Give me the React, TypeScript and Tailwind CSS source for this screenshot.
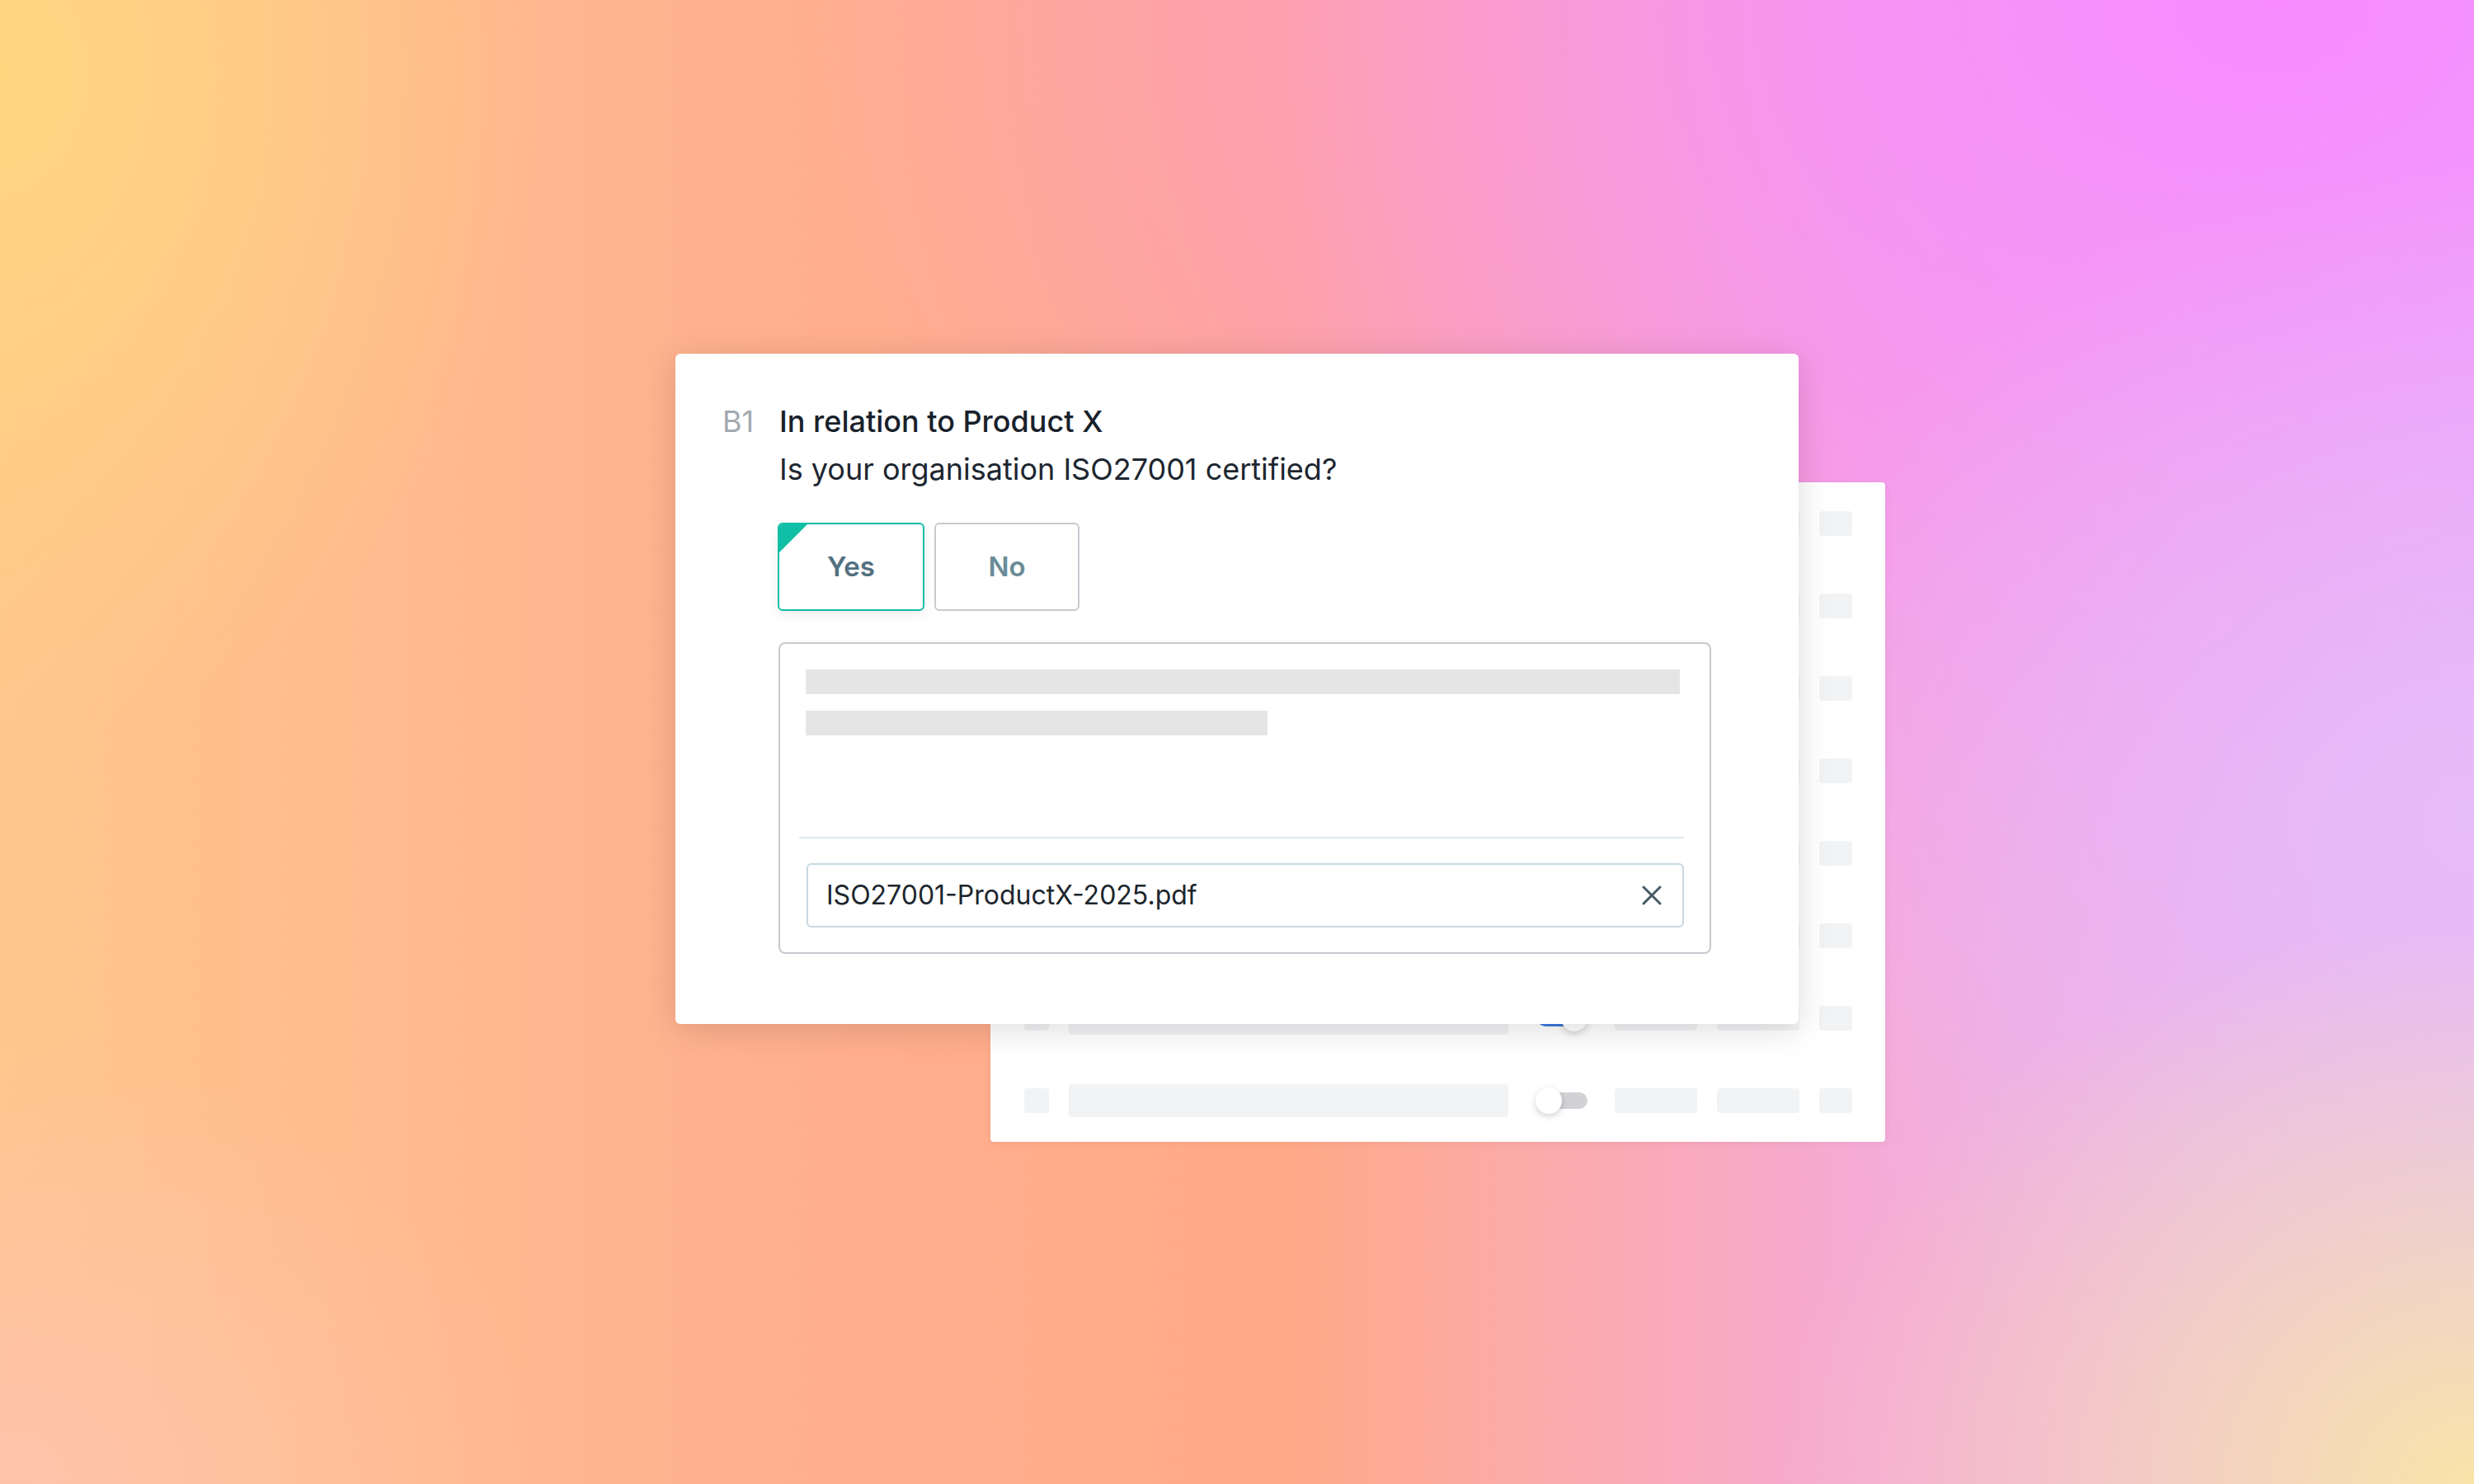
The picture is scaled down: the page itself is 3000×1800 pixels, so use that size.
import { X } from "lucide-react";

const rows = [false, true, false, false, true, false, true, false];

function Toggle({ on }: { on: boolean }) {
  return (
    <div className="relative w-[63px] h-[32px] shrink-0">
      <div
        className={`absolute left-[2px] right-0 top-[6px] h-[20px] rounded-full ${
          on ? "bg-[#3b7ddd]" : "bg-[#d1d1d6]"
        }`}
      />
      <div
        className={`absolute top-0 w-[32px] h-[32px] rounded-full bg-white shadow-[0_3px_8px_rgba(0,0,0,0.18)] ${
          on ? "right-0" : "left-0"
        }`}
      />
    </div>
  );
}

function BackRow({ on }: { on: boolean }) {
  return (
    <div className="flex items-center h-[100px] pl-[41px]">
      <div className="w-[30px] h-[30px] rounded-[4px] bg-[#f2f3f5] shrink-0" />
      <div className="ml-[24px] w-[533px] h-[40px] rounded-[4px] bg-[#f2f3f5] shrink-0" />
      <div className="ml-[33px]">
        <Toggle on={on} />
      </div>
      <div className="ml-[33px] w-[100px] h-[30px] rounded-[4px] bg-[#f2f3f5] shrink-0" />
      <div className="ml-[24px] w-[100px] h-[30px] rounded-[4px] bg-[#f2f3f5] shrink-0" />
      <div className="ml-[24px] w-[40px] h-[30px] rounded-[4px] bg-[#f2f3f5] shrink-0" />
    </div>
  );
}

export default function App() {
  return (
    <div className="w-[3000px] h-[1800px] overflow-hidden font-['Inter',sans-serif] bg-[radial-gradient(ellipse_28%_38%_at_100%_100%,#f8e4a8_0%,rgba(248,228,168,0)_100%),radial-gradient(ellipse_22%_45%_at_0%_5%,#ffd680_0%,rgba(255,214,128,0)_100%),radial-gradient(ellipse_22%_30%_at_0%_100%,#ffc3ac_0%,rgba(255,195,172,0)_100%),radial-gradient(ellipse_30%_45%_at_100%_55%,#e6bcf8_0%,rgba(230,188,248,0)_100%),radial-gradient(ellipse_60%_75%_at_92%_0%,#f78bff_0%,rgba(247,139,255,0)_100%),linear-gradient(90deg,#ffc68c_0%,#ffb08f_30%,#ffaa88_52%,#f6aad4_75%,#e6b8f6_100%)] pl-[819px] pt-[429px]">
      <div className="relative w-[1467px] h-[956px]">
        {/* back panel */}
        <div className="absolute left-[382px] top-[156px] w-[1085px] h-[800px] rounded-[4px] bg-white shadow-[0_2px_10px_rgba(0,0,0,0.06)] flex flex-col">
          {rows.map((on, i) => (
            <BackRow key={i} on={on} />
          ))}
        </div>

        {/* question card */}
        <div className="absolute left-0 top-0 w-[1362px] h-[813px] rounded-[6px] bg-white shadow-[0_6px_40px_rgba(0,0,0,0.14)] flex pl-[57px] pt-[53px]">
          <div className="w-[69px] shrink-0 text-[36px] leading-[58px] text-[#a3a9b0]">B1</div>
          <div className="flex flex-col">
            <div className="text-[36px] leading-[58px] font-medium text-[#18212b]">In relation to Product X</div>
            <div className="text-[36px] leading-[58px] text-[#1d2630]">Is your organisation ISO27001 certified?</div>

            <div className="flex gap-[12px] mt-[36px] -ml-[2px]">
              <div className="relative w-[178px] h-[107px] rounded-[6px] border-2 border-[#10bfa6] overflow-hidden bg-white shadow-[0_4px_14px_rgba(0,0,0,0.08)] flex items-center justify-center text-[33px] font-semibold text-[#527080]">
                <svg className="absolute top-0 left-0" width="34" height="34" viewBox="0 0 34 34">
                  <polygon points="0,0 34,0 0,34" fill="#10bfa6" />
                </svg>
                Yes
              </div>
              <div className="w-[176px] h-[107px] rounded-[6px] border-2 border-[#c6cbd0] bg-white flex items-center justify-center text-[33px] font-semibold text-[#6b8b97]">
                No
              </div>
            </div>

            <div className="mt-[38px] -ml-[1px] w-[1131px] h-[378px] rounded-[8px] border-2 border-[#c6cacf] flex flex-col">
              <div className="mt-[31px] ml-[31px] w-[1060px] h-[30px] bg-[#e5e5e5]" />
              <div className="mt-[20px] ml-[31px] w-[560px] h-[30px] bg-[#e5e5e5]" />
              <div className="mt-[123px] ml-[23px] w-[1073px] h-[2px] bg-[#dfe9ed]" />
              <div className="mt-[30px] ml-[32px] w-[1064px] h-[78px] rounded-[6px] border-2 border-[#c9d8e0] flex items-center pl-[22px] pr-[17px]">
                <span className="flex-1 text-[32px] text-[#1c262d]">ISO27001-ProductX-2025.pdf</span>
                <X className="w-[40px] h-[40px] text-[#455a64]" strokeWidth={1.8} />
              </div>
            </div>
          </div>
        </div>
      </div>
    </div>
  );
}
